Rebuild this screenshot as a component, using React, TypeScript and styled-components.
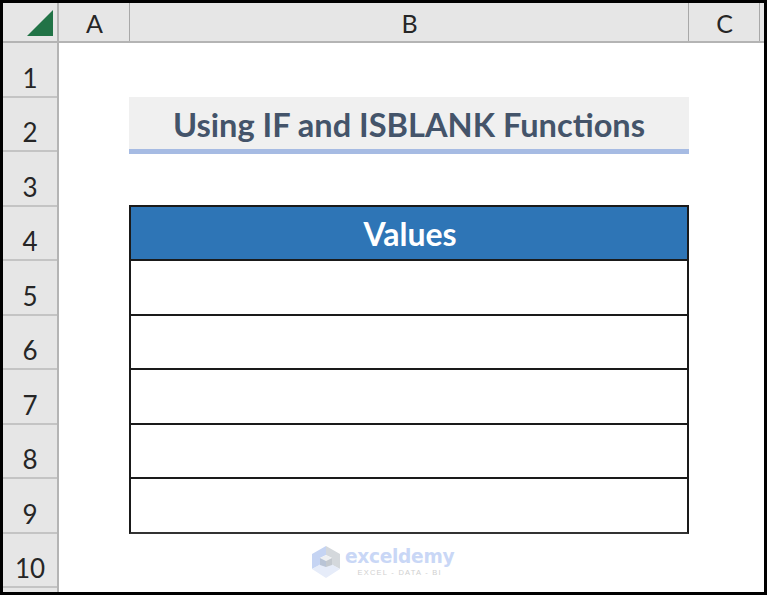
import React from "react";
import styled, { createGlobalStyle } from "styled-components";

const Global = createGlobalStyle`
  html, body { margin: 0; padding: 0; background: #000; }
  body { font-family: "Lato", "Open Sans", sans-serif; }
`;

const Frame = styled.div`
  box-sizing: border-box;
  width: 767px;
  height: 595px;
  padding: 3px;
  background: #000;
  overflow: hidden;
`;

const Sheet = styled.div`
  display: grid;
  grid-template-columns: 56px 1fr;
  grid-template-rows: 40px 1fr;
  height: 100%;
  background: #fff;
`;

const Corner = styled.div`
  display: flex;
  align-items: flex-end;
  justify-content: flex-end;
  padding: 0 3px 5px 0;
  box-sizing: border-box;
  background: #e6e6e6;
  border-right: 2px solid #b4b4b4;
  border-bottom: 2px solid #b4b4b4;
`;

const ColumnHeaders = styled.div`
  display: grid;
  grid-template-columns: 71px 559px 71px 1fr;
  background: #e6e6e6;
  border-bottom: 2px solid #b4b4b4;
`;

const ColumnHeader = styled.div`
  display: flex;
  align-items: center;
  justify-content: center;
  padding: 2px 0 0 1px;
  border-right: 1px solid #a8a8a8;
  font-size: 25px;
  color: #262626;
  &:last-child { border-right: 0; }
`;

const RowHeaders = styled.div`
  display: flex;
  flex-direction: column;
  background: #e6e6e6;
  border-right: 2px solid #b4b4b4;
  overflow: hidden;
`;

const RowHeader = styled.div`
  box-sizing: border-box;
  flex: 0 0 54.5px;
  display: flex;
  align-items: flex-end;
  justify-content: center;
  padding-bottom: 1px;
  border-bottom: 2px solid #c4c4c4;
  font-size: 26px;
  line-height: 34px;
  color: #262626;
`;

const Cells = styled.div`
  display: grid;
  grid-template-columns: 70px 560px 1fr;
  grid-template-rows: repeat(10, 54.5px);
  background: #fff;
  overflow: hidden;
`;

const Title = styled.div`
  grid-column: 2;
  grid-row: 2;
  display: flex;
  align-items: center;
  justify-content: center;
  box-sizing: border-box;
  margin: -1px 0 -2px;
  padding-top: 4px;
  background: #f0f0f0;
  border-bottom: 5px solid #a6bbe3;
  font-size: 32.6px;
  font-weight: 700;
  color: #44546a;
`;

const ValuesTable = styled.div`
  grid-column: 2;
  grid-row: 4 / span 6;
  display: grid;
  grid-template-rows: repeat(5, 54.5px) 1fr;
  box-sizing: border-box;
  margin-top: -2px;
  height: 329px;
  border: 2px solid #1a1a1a;
  border-bottom-color: #333;
`;

const HeadCell = styled.div`
  display: flex;
  align-items: center;
  justify-content: center;
  padding: 2px 0 0 2px;
  background: #2e75b6;
  border-bottom: 2px solid #1a1a1a;
  font-size: 32px;
  font-weight: 700;
  color: #fff;
`;

const BodyCell = styled.div`
  border-bottom: 2px solid #1a1a1a;
  &:last-child { border-bottom: 0; }
`;

const Watermark = styled.div`
  grid-column: 2;
  grid-row: 10;
  display: flex;
  align-items: center;
  justify-content: flex-start;
  gap: 5px;
  padding: 2px 0 0 183px;
`;

const Brand = styled.div`
  display: flex;
  flex-direction: column;
  align-items: center;
`;

const BrandName = styled.span`
  font-family: "DejaVu Sans", sans-serif;
  font-size: 18.6px;
  font-weight: 700;
  line-height: 22px;
  color: #c9d7f6;
  letter-spacing: -0.3px;
`;

const BrandTag = styled.span`
  font-family: "Liberation Sans", sans-serif;
  font-size: 7.5px;
  line-height: 9px;
  letter-spacing: 1.25px;
  color: #d0d0d0;
`;

const rows = [1, 2, 3, 4, 5, 6, 7, 8, 9, 10, 11];

export default function App() {
  return (
    <Frame>
      <Global />
      <Sheet>
        <Corner>
          <svg width="27" height="26" viewBox="0 0 27 26">
            <polygon points="26,0 26,26 0,26" fill="#217346" />
          </svg>
        </Corner>
        <ColumnHeaders>
          <ColumnHeader>A</ColumnHeader>
          <ColumnHeader>B</ColumnHeader>
          <ColumnHeader>C</ColumnHeader>
          <ColumnHeader />
        </ColumnHeaders>
        <RowHeaders>
          {rows.map((r) => (
            <RowHeader key={r}>{r < 11 ? r : ""}</RowHeader>
          ))}
        </RowHeaders>
        <Cells>
          <Title>Using IF and ISBLANK Functions</Title>
          <ValuesTable>
            <HeadCell>Values</HeadCell>
            <BodyCell />
            <BodyCell />
            <BodyCell />
            <BodyCell />
            <BodyCell />
          </ValuesTable>
          <Watermark>
            <svg width="28" height="32" viewBox="0 0 28 32">
              <polygon points="14,0 0,8 0,23 8,19 8,12 14,9" fill="#c5d4f3" />
              <polygon points="14,0 28,8 28,23 20,19 20,12 14,9" fill="#d4d8dc" />
              <polygon points="0,23 14,32 28,23 14,15" fill="#e6ecf9" />
              <polygon points="8,12 14,9 20,12 14,15" fill="#eef0f2" />
              <polygon points="8,12 14,15 14,21 8,19" fill="#b9c4d6" />
              <polygon points="20,12 14,15 14,21 20,19" fill="#c4c9cf" />
            </svg>
            <Brand>
              <BrandName>exceldemy</BrandName>
              <BrandTag>EXCEL - DATA - BI</BrandTag>
            </Brand>
          </Watermark>
        </Cells>
      </Sheet>
    </Frame>
  );
}
